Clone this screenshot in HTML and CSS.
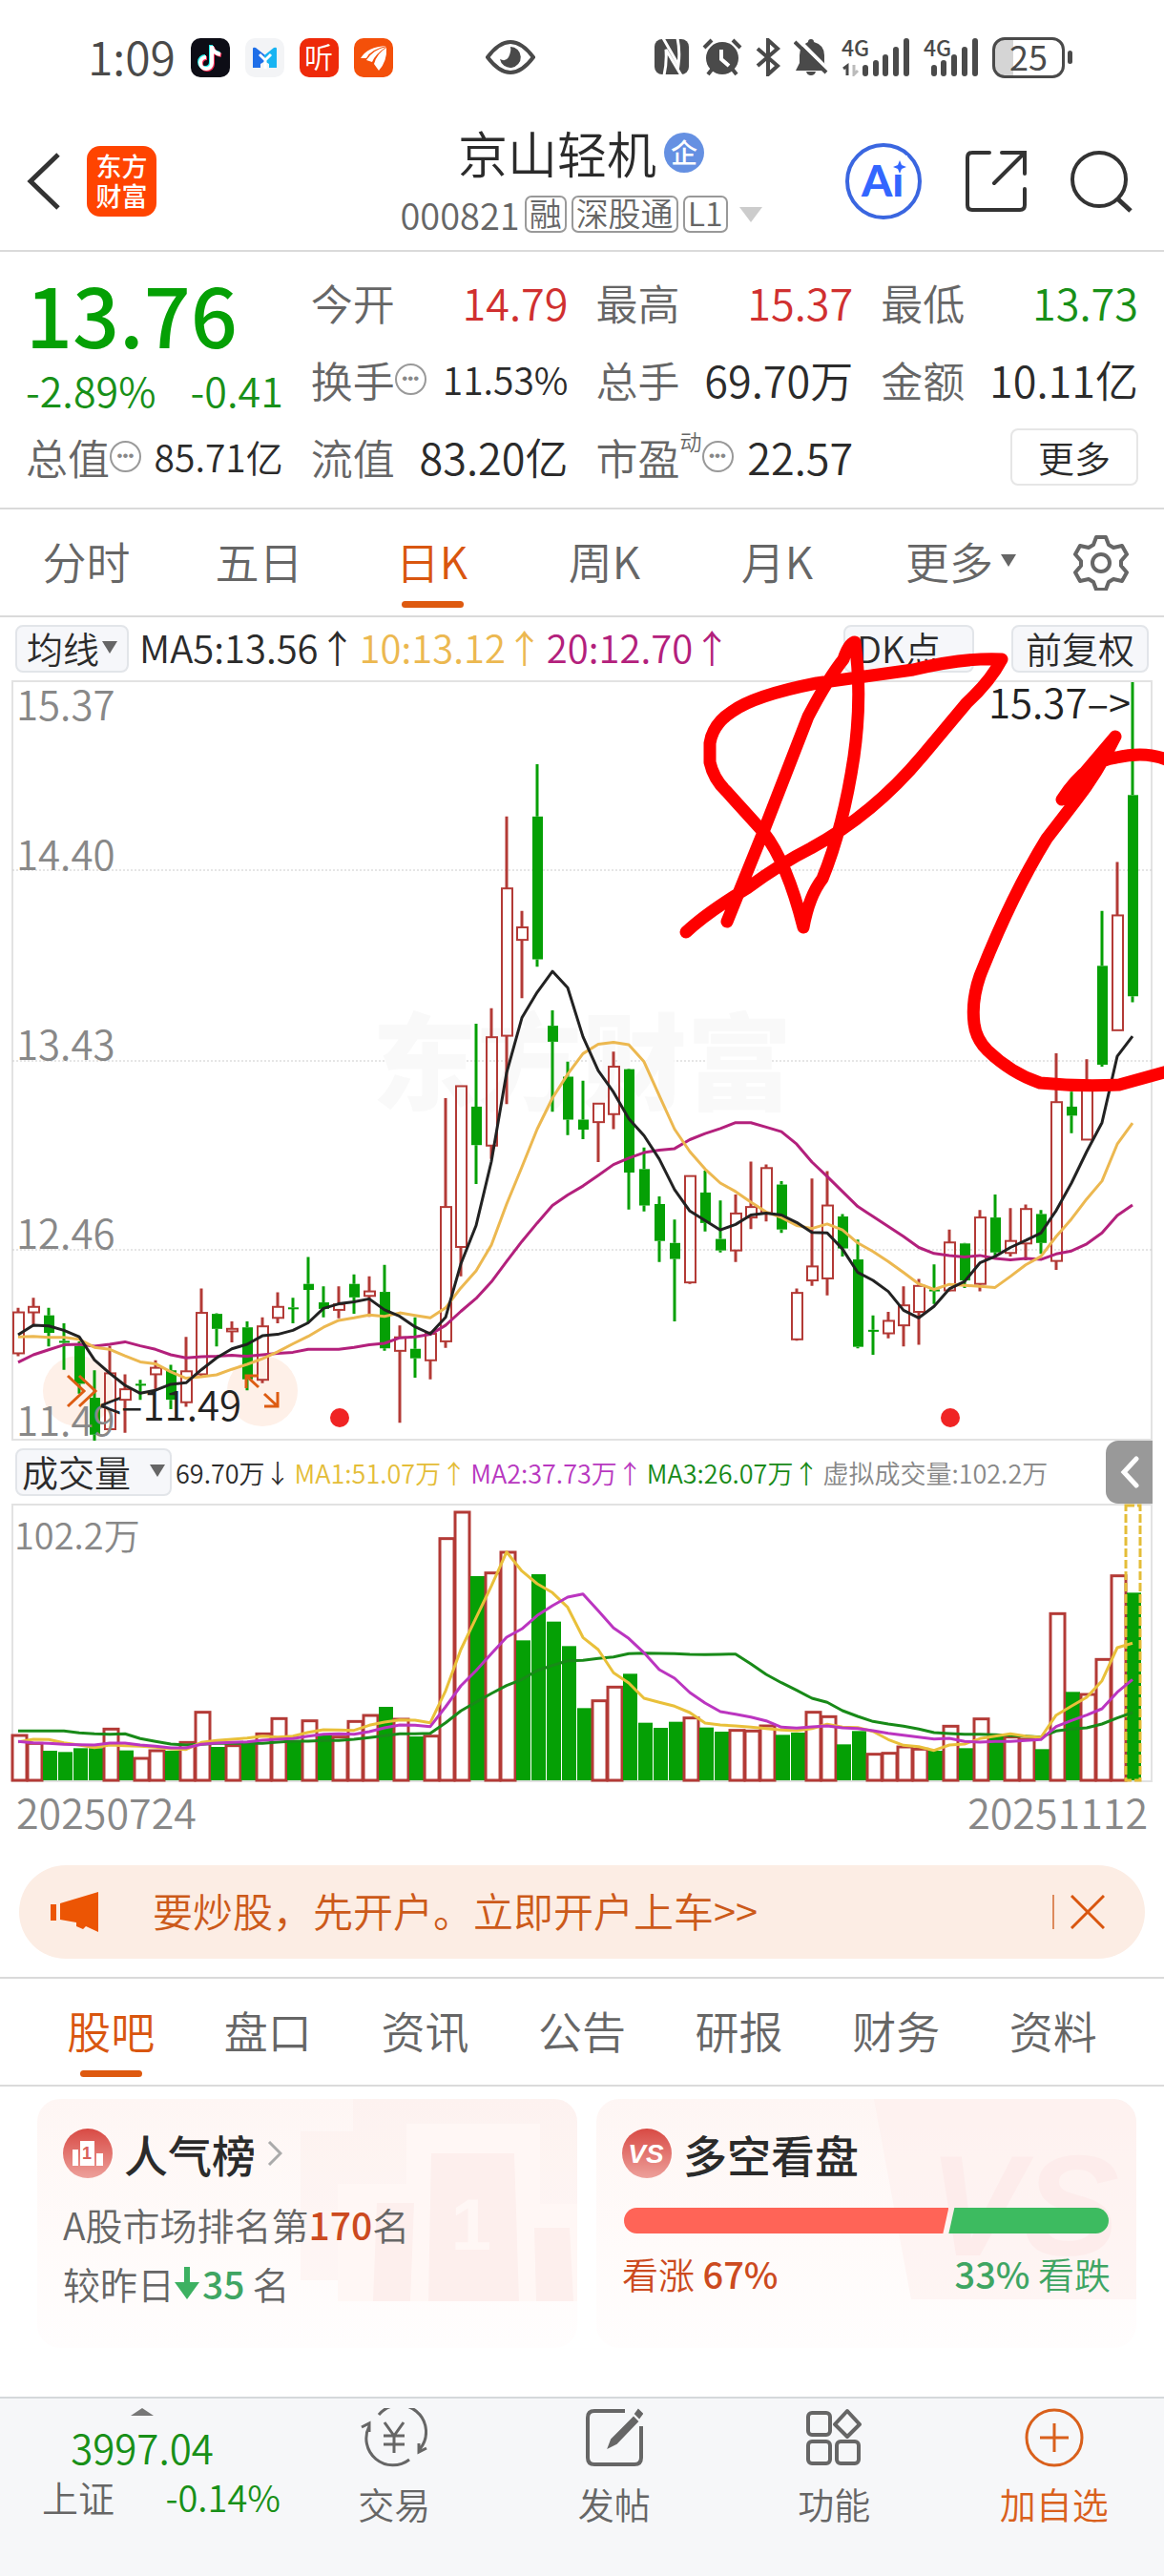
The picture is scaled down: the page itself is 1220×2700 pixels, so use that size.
FILE: index.html
```html
<!DOCTYPE html>
<html lang="zh-CN">
<head>
    <meta charset="UTF-8">
    <meta name="viewport" content="width=device-width, initial-scale=1.0">
    <title>京山轻机 000821</title>
    <link rel="stylesheet" href="styles.css">
</head>
<body>
    <div class="statusbar">
        <div class="status-left">
            <span class="clock">1:09</span>
            <svg class="app" viewBox="0 0 41 41"><rect width="41" height="41" rx="10" fill="#0d0d16"/><path d="M21 7v18a6 6 0 1 1-6-6M21 8c1 5 4 7 9 8" fill="none" stroke="#25f4ee" stroke-width="4"/><path d="M23 9v18a6 6 0 1 1-6-6M23 10c1 5 4 7 9 8" fill="none" stroke="#fe2c55" stroke-width="4"/><path d="M22 8v18a6 6 0 1 1-6-6M22 9c1 5 4 7 9 8" fill="none" stroke="#fff" stroke-width="4"/></svg>
            <svg class="app" viewBox="0 0 41 41"><rect width="41" height="41" rx="10" fill="#f3f4f6"/><path d="M8 11q0-2 3-1l10 8v6l-5 3v4H8z" fill="#1f6fe8"/><path d="M33 11q0-2-3-1l-10 8v6l5 3v4h8z" fill="#18b4f2"/><path d="M15 17l6 6 6-6M21 23v9" fill="none" stroke="#fff" stroke-width="3"/></svg>
            <svg class="app" viewBox="0 0 41 41"><rect width="41" height="41" rx="10" fill="#ee2a0a"/><text class="ting" x="20" y="31" text-anchor="middle">听</text></svg>
            <svg class="app" viewBox="0 0 41 41"><rect width="41" height="41" rx="10" fill="#f4500a"/><path d="M7 21Q14 9 34 8Q17 12 13 21zM13 23Q20 12 34 9Q22 17 19 25zM21 27Q24 16 34 10Q35 24 26 34z" fill="#fff"/></svg>
        </div>
        <svg class="eye" viewBox="0 0 52 38"><path d="M2 19Q14 3 26 3T50 19Q38 35 26 35T2 19z" fill="none" stroke="#4a4a4a" stroke-width="4"/><path d="M26 8a11 11 0 1 1-11 13q6 3 9-2 3-6 2-11z" fill="#4a4a4a"/></svg>
        <div class="status-right">
            <svg width="36" height="40" viewBox="0 0 36 40"><rect y="1" width="36" height="37" rx="8" fill="#4a4a4a"/><path d="M9 0l16 28q2-14-1-28M10 39q3-13 2-27l16 27" fill="none" stroke="#fff" stroke-width="3"/></svg>
            <svg width="42" height="40" viewBox="0 0 42 40"><circle cx="21" cy="21" r="17" fill="#4a4a4a"/><path d="M2 10l8-8M40 10l-8-8M10 33l-4 5M32 33l4 5" stroke="#4a4a4a" stroke-width="4"/><path d="M20 12v10l8 7" fill="none" stroke="#fff" stroke-width="4"/></svg>
            <svg width="26" height="40" viewBox="0 0 26 40"><path d="M2 11l21 18-10 9V2l10 9L2 29" fill="none" stroke="#4a4a4a" stroke-width="4"/></svg>
            <svg width="36" height="40" viewBox="0 0 36 40"><path d="M18 1q3 0 3 3 11 3 11 14v8l3 8H2l4-8v-8q0-10 9-14 0-3 3-3zM13 35h10q-1 4-5 4t-5-4z" fill="#4a4a4a"/><path d="M5 2l31 31" stroke="#fff" stroke-width="4"/><path d="M1 4l33 32" stroke="#4a4a4a" stroke-width="4"/></svg>
            <span class="signal"><b>4G</b><svg width="72" height="40" viewBox="0 0 72 40"><path d="M6 39V29l-4 3" fill="none" stroke="#4a4a4a" stroke-width="3"/><path d="M13 28v10l4-4" fill="none" stroke="#bbb" stroke-width="3"/><path d="M25 31v6M36 26v11M46 20v17M57 12v25M68 3v34" stroke="#4a4a4a" stroke-width="6" stroke-linecap="round"/></svg></span>
            <span class="signal"><b>4G</b><svg width="58" height="40" viewBox="0 0 58 40"><path d="M11 31v6M21 26v11M32 20v17M43 12v25M54 3v34" stroke="#4a4a4a" stroke-width="6" stroke-linecap="round"/></svg></span>
            <span class="battery">25</span>
        </div>
    </div>

    <header class="topbar">
        <button class="plain" aria-label="返回"><svg width="36" height="60" viewBox="0 0 36 60"><path d="M33 2L4 30l29 28" fill="none" stroke="#333" stroke-width="5"/></svg></button>
        <a class="logo" href="#">东方<br>财富</a>
        <div class="title">
            <h1>京山轻机<span class="corp">企</span></h1>
            <p class="code">000821<span class="mark">融</span><span class="mark">深股通</span><span class="mark">L1</span><i class="tri"></i></p>
        </div>
        <div class="tools">
            <button class="plain" aria-label="AI"><svg width="80" height="80" viewBox="0 0 80 80"><circle cx="40" cy="40" r="38" fill="none" stroke="#3a66e0" stroke-width="4"/><text class="ai" x="39" y="56" text-anchor="middle">Ai</text><path d="M49 13h16v20H49z" fill="#fff"/><path d="M57 18l2 5 5 2-5 2-2 5-2-5-5-2 5-2z" fill="#3366ff"/></svg></button>
            <button class="plain" aria-label="分享"><svg width="64" height="64" viewBox="0 0 64 64"><path d="M25 2H7Q2 2 2 7v50q0 5 5 5h50q5 0 5-5V40M38 2h24v22M61 3L30 34" fill="none" stroke="#333" stroke-width="4" stroke-linecap="round"/></svg></button>
            <button class="plain" aria-label="搜索"><svg width="66" height="66" viewBox="0 0 66 66"><circle cx="30" cy="31" r="28" fill="none" stroke="#333" stroke-width="4"/><path d="M49 51l14 13" stroke="#333" stroke-width="5"/></svg></button>
        </div>
    </header>

    <section class="quote">
        <div class="price">
            <strong>13.76</strong>
            <span class="chg"><span>-2.89%</span><span>-0.41</span></span>
        </div>
        <div class="cell"><span>今开</span><b class="up">14.79</b></div>
        <div class="cell"><span>最高</span><b class="up">15.37</b></div>
        <div class="cell"><span>最低</span><b class="down">13.73</b></div>
        <div class="cell"><span>换手<i class="info">•••</i></span><b class="small">11.53%</b></div>
        <div class="cell"><span>总手</span><b>69.70万</b></div>
        <div class="cell"><span>金额</span><b>10.11亿</b></div>
        <div class="cell"><span>总值<i class="info">•••</i></span><b class="small">85.71亿</b></div>
        <div class="cell"><span>流值</span><b>83.20亿</b></div>
        <div class="cell"><span>市盈<sup>动</sup><i class="info">•••</i></span><b>22.57</b></div>
        <div class="cell cell-more"><button class="more">更多</button></div>
    </section>

    <nav class="periods">
        <button>分时</button>
        <button>五日</button>
        <button class="active">日K</button>
        <button>周K</button>
        <button>月K</button>
        <button class="drop">更多<i class="caret"></i></button>
        <button class="gear" aria-label="设置"><svg width="58" height="58" viewBox="0 0 58 58"><path d="M24 2h10l3 8 5 3 9-2 5 9-6 7v5l6 7-5 9-9-2-5 3-3 8H24l-3-8-5-3-9 2-5-9 6-7v-5l-6-7 5-9 9 2 5-3z" fill="none" stroke="#666" stroke-width="4" stroke-linejoin="round"/><circle cx="29" cy="29" r="9" fill="none" stroke="#666" stroke-width="4"/></svg></button>
    </nav>

    <div class="mabar">
        <button class="chip">均线<i class="caret"></i></button>
        <span class="ma5">MA5:13.56↑</span>
        <span class="ma10">10:13.12↑</span>
        <span class="ma20">20:12.70↑</span>
        <button class="chip dk">DK点</button>
        <button class="chip">前复权</button>
    </div>

    <div class="kline">
        <svg class="chart" id="kline" viewBox="0 0 1220 797">
            <g class="grid">
                <path class="frame" d="M12 1H1208M12 796H1208M13 1V796M1207 1V796"/>
                <path class="dots" d="M13 199H1207M13 399H1207M13 597H1207"/>
            </g>
            <text class="watermark" x="390" y="442">东方财富</text>
            <circle class="round" cx="82" cy="745" r="37"/>
            <circle class="round" cx="275" cy="745" r="37"/>
            <g id="candles"></g>
            <g id="lines"></g>
            <g class="axis">
                <text x="17" y="42">15.37</text>
                <text x="17" y="199">14.40</text>
                <text x="17" y="398">13.43</text>
                <text x="17" y="596">12.46</text>
                <text x="17" y="792">11.49</text>
            </g>
            <path class="orange" d="M71 729l17 16-17 16M83 729l17 16-17 16M258 742v-13h13M258 729l13 12M277 761h14v-15M291 761l-14-13"/>
            <text class="note" x="104" y="776">&lt;–11.49</text>
            <text class="note" x="1185" y="40" text-anchor="end">15.37–&gt;</text>
            <circle cx="356" cy="773" r="10" fill="#f02424"/>
            <circle cx="996" cy="773" r="10" fill="#f02424"/>
        </svg>
        <svg class="scribble" viewBox="0 654 1220 500">
            <path d="M719 978Q740 958 783 932Q820 905 850 890Q915 855 967 793L1013 738Q1038 715 1050 692Q1010 690 957 703L856 717Q790 730 767 747Q747 760 744 780V800Q748 818 762 831L800 873Q825 905 842 973Q848 940 862 922Q884 868 895 794Q904 730 896 674Q890 674 884 692Q868 712 847 752L800 873L762 967"/>
            <path d="M1169 773L1113 839Q1140 798 1170 795Q1200 788 1222 797M1169 773Q1150 812 1127 841L1097 880Q1060 940 1027 1024Q1018 1050 1021 1074Q1023 1090 1035 1102Q1060 1126 1090 1136Q1130 1140 1173 1138L1224 1124M1160 787L1122 832"/>
        </svg>
    </div>

    <div class="volbar">
        <button class="chip">成交量<i class="caret"></i></button>
        <span>69.70万↓</span>
        <span class="v1">MA1:51.07万↑</span>
        <span class="v2">MA2:37.73万↑</span>
        <span class="v3">MA3:26.07万↑</span>
        <span class="v4">虚拟成交量:102.2万</span>
        <button class="fold" aria-label="收起"><svg width="20" height="34" viewBox="0 0 20 34"><path d="M17 3L4 17l13 14" fill="none" stroke="#fff" stroke-width="5" stroke-linecap="round"/></svg></button>
    </div>

    <svg class="chart" id="volume" viewBox="0 0 1220 292">
        <path class="frame" d="M12 1H1208M12 291H1208M13 1V291M1207 1V291"/>
        <g id="bars"></g>
        <g id="vlines"></g>
        <text class="vmax" x="15" y="48">102.2万</text>
    </svg>
    <div class="dates"><span>20250724</span><span>20251112</span></div>

    <div class="banner">
        <svg width="50" height="42" viewBox="0 0 50 42"><path d="M0 13h6v17H0zM10 12L50 0v42l-13-6-3 3-7-3v-4l-17-3z" fill="#ec5504"/></svg>
        <a href="#">要炒股，先开户。立即开户上车&gt;&gt;</a>
        <button class="plain" aria-label="关闭"><svg width="36" height="36" viewBox="0 0 36 36"><path d="M1 1l34 34M35 1L1 35" stroke="#d9560f" stroke-width="3"/></svg></button>
    </div>

    <nav class="sections">
        <button class="active">股吧</button>
        <button>盘口</button>
        <button>资讯</button>
        <button>公告</button>
        <button>研报</button>
        <button>财务</button>
        <button>资料</button>
    </nav>

    <main class="cards">
        <article class="card">
            <svg class="deco" viewBox="0 0 566 261">
                <path d="M331 0H566V190H276V34h55z" fill="#fdeeec" opacity=".4"/>
                <path d="M315 212V89h72V26h140v84h39v102z" fill="#fff7f5"/>
                <path d="M356 109h39l-4 103h-39zM413 57h87l5 155H410zM521 135h37l4 77h-39z" fill="#fdefed"/>
                <text class="one" x="455" y="158" text-anchor="middle">1</text>
            </svg>
            <h2><svg width="52" height="52" viewBox="0 0 52 52"><defs><linearGradient id="g" x2="0" y2="1"><stop stop-color="#d84a44"/><stop offset="1" stop-color="#eda09b"/></linearGradient></defs><circle cx="26" cy="26" r="26" fill="url(#g)"/><path d="M10 22h6v17h-6zM18 13h15v26H18zM35 26h7v13h-7z" fill="#fff"/><text class="first" x="25" y="32" text-anchor="middle">1</text></svg>人气榜<svg class="go" width="16" height="26" viewBox="0 0 16 26"><path d="M2 1l12 12L2 25" fill="none" stroke="#aaa" stroke-width="3"/></svg></h2>
            <p>A股市场排名第<b>170</b>名</p>
            <p>较昨日<svg width="26" height="34" viewBox="0 0 26 34"><path d="M10 0h6v16h10L13 34 0 16h10z" fill="#3db161"/></svg><b class="fall">35</b>名</p>
        </article>
        <article class="card">
            <svg class="deco" viewBox="0 0 566 261">
                <path d="M291 0H566V210H330Z" fill="#fdeeec" opacity=".5"/>
                <text x="348" y="164" class="vs">VS</text>
            </svg>
            <h2><svg width="52" height="52" viewBox="0 0 52 52"><circle cx="26" cy="26" r="26" fill="url(#g)"/><text x="25" y="36" text-anchor="middle" class="vsicon">VS</text></svg>多空看盘</h2>
            <div class="ratio"><span class="bull"></span><span class="bear"></span></div>
            <div class="ratio-text"><span class="rise">看涨 <b>67%</b></span><span class="fall"><b>33%</b> 看跌</span></div>
        </article>
    </main>

    <footer class="bottombar">
        <a class="index" href="#">
            <i></i>
            <span class="val">3997.04</span>
            <span class="row"><span>上证</span><em>-0.14%</em></span>
        </a>
        <a href="#"><svg width="70" height="62" viewBox="0 0 70 62" fill="none" stroke="#666" stroke-width="3"><path d="M19 7a28 28 0 0 1 43 36M51 54A28 28 0 0 1 9 19M1 20l8-4v9M69 42l-8 4v-9M25 15l10 14 10-14M35 29v18M24 29h22M24 38h22"/></svg>交易</a>
        <a href="#"><svg width="60" height="62" viewBox="0 0 60 62"><path d="M41 3H9Q2 3 2 10v42q0 7 7 7h42q7 0 7-7V19" fill="none" stroke="#666" stroke-width="4"/><path d="M50 10L27 33l-3 8 8-4 22-23zM52 6l3-4 4 4-3 4z" fill="#666" stroke="#666" stroke-width="2"/></svg>发帖</a>
        <a href="#"><svg width="58" height="62" viewBox="0 0 58 62" fill="none" stroke="#666" stroke-width="4"><rect x="2" y="5" width="23" height="23" rx="4"/><rect x="2" y="35" width="23" height="23" rx="4"/><rect x="32" y="35" width="23" height="23" rx="4"/><path d="M43 3l13 14-13 13-13-13z" stroke-linejoin="round"/></svg>功能</a>
        <a class="add" href="#"><svg width="62" height="62" viewBox="0 0 62 62" fill="none" stroke="#d9601c" stroke-width="3"><circle cx="31" cy="31" r="29"/><path d="M31 16v30M16 31h30"/></svg>加自选</a>
    </footer>
    <script src="chart.js"></script>
</body>
</html>
```

FILE: styles.css
```css
* {
    box-sizing: border-box;
}
body {
    margin: 0;
    background: #fff;
    color: #2b2b2b;
    font-family: "Noto Sans CJK SC", "Noto Sans", sans-serif;
    font-weight: 350;
    font-size: 38px;
    line-height: 1;
    min-height: 100vh;
    display: flex;
    flex-direction: column;
}
button {
    font: inherit;
    color: inherit;
    padding: 0;
    border: none;
    background: none;
    cursor: pointer;
}
a {
    color: inherit;
    text-decoration: none;
}
i, em {
    font-style: normal;
}
svg {
    display: block;
    flex: none;
}
.plain {
    display: block;
}

/* status bar */
.statusbar {
    height: 120px;
    padding: 0 104px 0 92px;
    display: flex;
    align-items: center;
    justify-content: space-between;
    color: #4a4a4a;
}
.status-left, .status-right {
    display: flex;
    align-items: center;
}
.status-left {
    gap: 16px;
}
.clock {
    padding-bottom: 4px;
    font-size: 48px;
}
.app {
    width: 41px;
    height: 41px;
}
.ting {
    font-size: 30px;
    fill: #fff;
}
.eye {
    width: 52px;
    height: 38px;
    margin-right: 28px;
}
.status-right {
    gap: 14px;
}
.signal {
    position: relative;
}
.signal b {
    position: absolute;
    left: 0;
    top: -2px;
    font-size: 23px;
    font-weight: 500;
}
.battery {
    width: 76px;
    height: 43px;
    border: 3px solid #4a4a4a;
    border-radius: 13px;
    background: linear-gradient(90deg, #d5d5d5 27%, #fff 27%);
    font-size: 36px;
    font-weight: 400;
    line-height: 33px;
    text-align: center;
    position: relative;
}
.battery::after {
    content: "";
    position: absolute;
    right: -11px;
    top: 11px;
    width: 5px;
    height: 14px;
    border-radius: 3px;
    background: #4a4a4a;
}

/* header */
.topbar {
    height: 144px;
    padding: 0 32px 2px 28px;
    border-bottom: 2px solid #dadada;
    display: flex;
    align-items: center;
}
.logo {
    width: 73px;
    height: 74px;
    margin-left: 27px;
    padding-top: 5px;
    border-radius: 14px;
    background: #ff4400;
    color: #fff;
    font-size: 27px;
    font-weight: 500;
    line-height: 31px;
    text-align: center;
}
.title {
    flex: 1;
    padding-left: 168px;
    display: flex;
    flex-direction: column;
    align-items: center;
    white-space: nowrap;
}
.title h1 {
    margin: 5px 0 0;
    font-size: 52px;
    font-weight: 350;
    line-height: 64px;
    display: flex;
    align-items: center;
}
.corp {
    width: 42px;
    height: 42px;
    margin-left: 8px;
    border-radius: 50%;
    background: #6590e2;
    color: #fff;
    font-size: 28px;
    font-weight: 500;
    line-height: 40px;
    text-align: center;
}
.code {
    margin: 0;
    height: 66px;
    display: flex;
    align-items: center;
    gap: 5px;
    color: #666;
}
.mark {
    height: 39px;
    padding: 0 3px;
    border: 2px solid #999;
    border-radius: 7px;
    font-size: 34px;
    line-height: 31px;
}
.tri {
    margin-left: 7px;
    border: 12px solid transparent;
    border-top: 16px solid #ccc;
    border-bottom: none;
}
.tools {
    display: flex;
    align-items: center;
    gap: 46px;
}
.ai {
    font: 900 46px Lato, sans-serif;
    fill: #3366ff;
}

/* quote */
.quote {
    height: 270px;
    padding: 12px 27px 10px;
    border-bottom: 2px solid #dadada;
    display: grid;
    grid-template-columns: repeat(4, 1fr);
    grid-template-rows: repeat(3, 81px);
    column-gap: 29px;
}
.price {
    grid-row: span 2;
    color: #05a005;
}
.price strong {
    display: block;
    padding-top: 4px;
    font-size: 86px;
    font-weight: 500;
    line-height: 96px;
}
.chg {
    display: flex;
    justify-content: space-between;
    font-size: 43px;
    line-height: 64px;
    color: #189018;
}
.cell {
    display: flex;
    align-items: center;
    justify-content: space-between;
    font-size: 44px;
    white-space: nowrap;
}
.cell > span {
    display: flex;
    align-items: center;
    color: #666;
}
.cell b {
    font-size: 45px;
    font-weight: 350;
}
.cell .up {
    color: #d03030;
}
.cell .down {
    color: #189018;
}
.cell .small {
    font-size: 39px;
}
.cell sup {
    align-self: flex-start;
    font-size: 23px;
    line-height: 10px;
}
.info {
    width: 33px;
    height: 33px;
    border: 2px solid #999;
    border-radius: 50%;
    color: #888;
    font-family: "Liberation Sans", sans-serif;
    font-size: 17px;
    line-height: 28px;
    text-align: center;
}
.cell-more {
    justify-content: flex-end;
}
.more {
    width: 134px;
    height: 60px;
    border: 2px solid #e6e6e6;
    border-radius: 8px;
    font-size: 38px;
    line-height: 50px;
}

/* tabs */
.periods, .sections {
    display: flex;
    color: #666;
    font-size: 46px;
    border-bottom: 2px solid #dadada;
}
.periods {
    height: 113px;
    padding-right: 37px;
}
.periods button {
    flex: 1;
    padding-bottom: 5px;
}
.periods .drop {
    flex: none;
    width: 220px;
    padding-right: 16px;
    display: flex;
    align-items: center;
    justify-content: center;
}
.periods .gear {
    flex: none;
    padding-bottom: 0;
    display: flex;
    align-items: center;
}
.active {
    color: #d9560f;
    position: relative;
}
.active::after {
    content: "";
    position: absolute;
    left: 50%;
    bottom: 8px;
    width: 65px;
    height: 7px;
    margin-left: -32px;
    border-radius: 4px;
    background: #de5a10;
}
.caret {
    display: inline-block;
    margin-left: 8px;
    border: 8px solid transparent;
    border-top: 13px solid #666;
    border-bottom: none;
}

/* moving averages */
.mabar, .volbar {
    display: flex;
    align-items: center;
    padding: 0 16px;
    white-space: nowrap;
}
.mabar {
    height: 66px;
}
.mabar > span {
    margin-right: 3px;
    padding-bottom: 4px;
    font-size: 40px;
}
.mabar .ma5 {
    margin-left: 11px;
}
.chip {
    height: 50px;
    padding: 0 10px 3px;
    border: 2px solid #e2e5e9;
    border-radius: 8px;
    background: #f6f7fa;
    display: flex;
    align-items: center;
}
.chip .caret {
    margin-left: 3px;
}
.ma10 {
    color: #ecb850;
}
.ma20 {
    color: #b3207c;
}
.dk {
    width: 137px;
    margin-left: auto;
    margin-right: 39px;
    padding-left: 12px;
}
.mabar .chip:last-child {
    padding: 0 13px 3px;
}

/* charts */
.kline {
    position: relative;
}
.chart {
    width: 100%;
    height: auto;
}
.scribble {
    position: absolute;
    left: 0;
    top: -60px;
    width: 100%;
    pointer-events: none;
    fill: none;
    stroke: #fe0000;
    stroke-width: 13;
    stroke-linecap: round;
    stroke-linejoin: round;
}
.frame {
    fill: none;
    stroke: #e2e2e2;
    stroke-width: 2;
}
.dots {
    stroke: #ccc;
    stroke-dasharray: 2 2;
}
.watermark {
    font-size: 110px;
    font-weight: 900;
    fill: #f9f9f9;
}
.round {
    fill: #fef0e8;
}
.axis {
    font-size: 42px;
    fill: #888;
}
.vmax {
    font-size: 38px;
    fill: #888;
}
.note {
    font-size: 42px;
    fill: #222;
}
.orange {
    fill: none;
    stroke: #dd5c12;
    stroke-width: 3;
}
.line {
    fill: none;
    stroke-width: 3;
    stroke-linejoin: round;
}
.volbar {
    height: 66px;
    padding-right: 12px;
    font-size: 27px;
    gap: 4px;
}
.volbar .chip {
    width: 164px;
    padding: 0 5px 3px;
    font-size: 38px;
    justify-content: space-between;
}
.v1 {
    color: #e4bd38;
}
.v2 {
    color: #b838c0;
}
.v3 {
    color: #188a18;
}
.v4 {
    color: #888;
}
.fold {
    width: 49px;
    height: 66px;
    margin-left: auto;
    border-radius: 13px 0 0 13px;
    background: #999;
    display: flex;
    align-items: center;
    justify-content: center;
}
.dates {
    height: 65px;
    padding: 0 17px 4px;
    display: flex;
    align-items: center;
    justify-content: space-between;
    font-size: 43px;
    color: #888;
}

/* ad banner */
.banner {
    height: 98px;
    margin: 22px 20px 19px;
    padding: 0 42px 0 33px;
    border-radius: 49px;
    background: #fcede4;
    color: #cc5a1a;
    font-size: 42px;
    display: flex;
    align-items: center;
}
.banner a {
    margin-left: 57px;
    padding-bottom: 4px;
}
.banner .plain {
    margin-left: auto;
    padding-left: 17px;
    border-left: 2px solid #dd8a5c;
}

.sections {
    height: 115px;
    padding: 0 34px;
    border-top: 2px solid #dadada;
}
.sections button {
    flex: 1;
    padding-bottom: 5px;
}

/* cards */
.cards {
    padding: 13px 29px 0 39px;
    display: grid;
    grid-template-columns: 1fr 1fr;
    gap: 20px;
}
.card {
    height: 261px;
    padding: 0 27px;
    border-radius: 24px;
    background: linear-gradient(#fef6f4, #fffbfa 60%, #fffdfd);
    position: relative;
    overflow: hidden;
    color: #666;
}
.deco {
    position: absolute;
    left: 0;
    top: 0;
    width: 100%;
}
.card > :not(.deco) {
    position: relative;
}
.card h2 {
    margin: 0;
    height: 114px;
    display: flex;
    align-items: center;
    gap: 12px;
    color: #2b2b2b;
    font-size: 46px;
    font-weight: 500;
}
.card p {
    margin: 0;
    height: 62px;
    display: flex;
    align-items: center;
    font-size: 39px;
}
.card p:first-of-type {
    margin-top: -14px;
}
.card p b {
    color: #cc4a20;
    font-weight: 500;
}
.card .fall, .card p .fall {
    color: #3fa563;
}
.card p .fall {
    margin: 0 8px 0 3px;
}
.rise {
    color: #cc4a20;
}
.one {
    font: bold 76px "Liberation Sans", sans-serif;
    fill: #fff7f5;
}
.first {
    font: bold 18px "Liberation Sans", sans-serif;
    fill: #d9605a;
}
.vs {
    font: italic bold 150px "Liberation Sans", sans-serif;
    fill: #fdeceb;
}
.vsicon {
    font: italic bold 28px "Liberation Sans", sans-serif;
    fill: #fff;
}
.ratio {
    display: flex;
    height: 27px;
    margin: 0 2px;
}
.ratio span {
    height: 100%;
}
.bull {
    flex: 67;
    border-radius: 14px 0 0 14px;
    background: #ff6457;
    clip-path: polygon(0 0, 100% 0, calc(100% - 6px) 100%, 0 100%);
}
.bear {
    flex: 33;
    border-radius: 0 14px 14px 0;
    background: #3dbb60;
    clip-path: polygon(6px 0, 100% 0, 100% 100%, 0 100%);
}
.ratio-text {
    display: flex;
    justify-content: space-between;
    line-height: 84px;
}
.ratio-text b {
    font-weight: 500;
}

/* bottom bar */
.bottombar {
    flex: 1;
    margin-top: 51px;
    min-height: 187px;
    padding-top: 10px;
    border-top: 2px solid #d5d8db;
    background: #f6f7f9;
    color: #666;
    display: grid;
    grid-template-columns: 298px repeat(4, 1fr);
}
.bottombar a {
    display: flex;
    flex-direction: column;
    align-items: center;
    gap: 19px;
}
.bottombar .add {
    color: #d9601c;
}
.bottombar .index {
    gap: 12px;
    color: #189018;
}
.index i {
    border: 12px solid transparent;
    border-bottom: 8px solid #777;
    border-top: none;
}
.index .val {
    font-size: 42px;
}
.index .row {
    width: 290px;
    padding-left: 40px;
    display: flex;
    justify-content: space-between;
    color: #666;
}
.index em {
    color: #189018;
}
```

FILE: chart.js
```js
const UP = '#b33a36', DOWN = '#05a005';
const x = i => 19 + i * 16;

// each candle: colour, high, body top, body bottom, low (28 = 15.37, 1547 = 11.49)
const candles = `r 1283 1292 1374 1380,r 1263 1281 1292 1320,g 1283 1298 1333 1360,g 1314 1349 1353 1407,
g 1350 1359 1435 1455,g 1408 1463 1537 1549,r 1359 1414 1526 1526,r 1416 1446 1467 1533,g 1427 1435 1438 1467,
r 1388 1403 1416 1449,g 1397 1408 1467 1486,r 1341 1410 1472 1481,r 1244 1293 1416 1422,g 1294 1295 1325 1360,
r 1310 1325 1330 1352,g 1310 1322 1426 1448,r 1302 1320 1427 1434,r 1252 1281 1303 1314,g 1263 1282 1285 1314,
g 1181 1235 1247 1312,g 1240 1272 1285 1302,r 1240 1276 1287 1304,g 1216 1235 1262 1295,r 1220 1250 1259 1301,
g 1197 1251 1364 1369,r 1318 1342 1369 1513,g 1302 1365 1384 1423,r 1330 1335 1388 1426,r 863 1081 1350 1363,
r 838 839 1161 1220,g 714 880 957 1035,r 683 741 958 985,r 299 443 738 875,r 488 521 546 663,g 194 299 585 600,
g 687 718 750 890,g 790 820 906 937,g 828 906 926 945,r 873 874 911 991,r 770 800 895 925,g 804 805 1012 1086,
g 962 1005 1078 1090,g 1060 1075 1149 1191,g 1106 1153 1185 1310,r 1018 1019 1232 1235,g 1008 1052 1113 1130,
g 1068 1145 1168 1172,r 1056 1094 1168 1191,r 990 1081 1102 1125,r 996 1003 1093 1110,g 1029 1036 1126 1133,
r 1244 1253 1346 1349,r 1024 1200 1228 1239,r 1009 1078 1224 1258,g 1095 1100 1164 1180,g 1146 1186 1361 1364,
g 1298 1327 1329 1377,r 1291 1309 1334 1344,r 1240 1278 1318 1360,r 1225 1239 1291 1357,g 1196 1246 1250 1275,
r 1126 1152 1248 1250,g 1153 1154 1228 1243,r 1087 1102 1235 1250,g 1056 1102 1172 1185,r 1083 1149 1173 1180,
r 1076 1085 1154 1188,g 1087 1095 1153 1175,r 773 871 1189 1207,g 850 880 898 933,r 785 830 946 946,
g 488 598 796 800,r 390 497 727 727,g 30 256 659 671`.split(',').map(s => s.trim().split(' '));

const ma = {
    '#b3207c': [1392,1377,1367,1357,1356,1360,1356,1351,1359,1366,1377,1383,1381,1380,1378,1380,1377,1374,1372,1366,1366,1366,1362,1357,1354,1343,1341,1336,1318,1290,1264,1231,1190,1150,1113,1078,1057,1039,1018,996,983,972,967,964,946,934,924,912,912,921,930,955,991,1020,1050,1080,1100,1120,1140,1162,1174,1178,1181,1178,1184,1187,1184,1186,1175,1169,1155,1133,1098,1077],
    '#ecb850': [1341,1340,1342,1342,1346,1362,1366,1379,1391,1395,1411,1424,1421,1417,1406,1396,1385,1371,1355,1340,1322,1308,1303,1297,1300,1293,1298,1303,1283,1243,1209,1157,1075,1001,925,863,815,774,755,751,756,790,858,925,970,1005,1033,1050,1071,1091,1102,1118,1124,1115,1127,1153,1170,1190,1212,1235,1246,1236,1238,1240,1242,1220,1197,1180,1140,1105,1065,1029,955,913],
    '#222': [1337,1318,1319,1328,1341,1387,1414,1438,1454,1448,1436,1433,1407,1383,1365,1356,1339,1336,1328,1313,1284,1275,1271,1265,1287,1300,1321,1335,1302,1195,1118,990,812,702,651,609,642,740,808,851,904,938,985,1046,1089,1108,1127,1116,1097,1093,1097,1112,1132,1133,1165,1212,1228,1250,1288,1303,1280,1245,1230,1193,1180,1162,1148,1133,1088,1033,970,912,779,739]
};

// volume bar tops (234 = 102.2万, 1102 = 0)
const volume = `r960 r985 g1008 g1012 g1000 g1000 r940 g1007 r1032 r1008 g1008 r982 r887 g996 r992 g985 r955 r907 g978 r914
g960 r965 r916 r897 g870 r909 g963 r962 r341 r258 g459 r449 r384 g661 g453 g602 g679 g874 r851 r808 g766 g920 g936 g917
r905 g935 g948 r944 r946 r930 g958 g951 r887 r901 g988 g946 r1019 r1016 r996 r1003 g1008 r931 g1000 r908 g960 r965 r972
g1003 r577 g823 r831 r721 r458 g511`.split(/\s+/);

const vma = {
    '#188a18': [946,946,946,946,952,955,956,955,970,979,987,990,988,985,985,985,985,981,978,978,976,976,972,967,961,955,955,953,920,883,855,828,803,784,756,740,725,724,718,713,703,701,702,703,705,706,705,704,735,768,794,818,843,856,882,900,916,924,931,940,951,954,956,956,958,960,962,965,946,940,936,924,905,888],
    '#e9c03a': [980,972,973,983,990,998,990,992,994,997,1002,1004,982,976,972,968,962,965,962,950,942,943,944,928,918,911,912,920,820,690,590,490,383,443,483,511,557,652,690,763,795,843,856,868,888,921,927,930,934,938,943,945,938,925,934,935,947,973,991,995,1007,990,987,970,962,955,962,966,896,868,840,788,684,670],
    '#bb35c0': [979,983,985,988,989,990,984,984,990,994,999,999,988,984,982,980,975,972,970,962,956,955,956,948,936,927,928,932,870,804,756,703,651,625,583,552,525,515,568,622,655,700,753,780,825,858,885,893,902,914,934,937,933,930,936,938,945,953,959,965,971,969,979,981,979,979,976,973,932,913,896,876,824,784]
};

const ky = v => 1 + (v - 28) * 795 / 1519;
const vy = v => 1 + (v - 234) / 3;

function polyline(values, y, color) {
    return `<polyline class="line" stroke="${color}" points="${values.map((v, i) => x(i) + ',' + y(v).toFixed(1)).join(' ')}"/>`;
}

document.getElementById('candles').innerHTML = candles.map(([c, h, t, b, l], i) => {
    const color = c === 'r' ? UP : DOWN;
    const top = ky(+t), bottom = ky(+b);
    const wick = `<path d="M${x(i)} ${ky(+h)}V${top}M${x(i)} ${bottom}V${ky(+l)}" stroke="${color}" stroke-width="3"/>`;
    if (c === 'r') {
        return wick + `<rect x="${x(i) - 5}" y="${top}" width="11" height="${Math.max(bottom - top, 1)}" fill="none" stroke="${color}" stroke-width="2"/>`;
    }
    return wick + `<rect x="${x(i) - 5}" y="${top}" width="11" height="${Math.max(bottom - top, 2)}" fill="${color}"/>`;
}).join('');

document.getElementById('lines').innerHTML = Object.keys(ma).map(c => polyline(ma[c], ky, c)).join('');

document.getElementById('bars').innerHTML = volume.map((s, i) => {
    const top = vy(+s.slice(1));
    if (s[0] === 'r') {
        return `<rect x="${x(i) - 6}" y="${top}" width="15" height="${290 - top}" fill="none" stroke="${UP}" stroke-width="3"/>`;
    }
    return `<rect x="${x(i) - 6}" y="${top}" width="15" height="${290 - top}" fill="${DOWN}"/>`;
}).join('') + '<rect x="1180" y="2" width="15" height="288" fill="none" stroke="#e4bd38" stroke-width="3" stroke-dasharray="9 3"/>';

document.getElementById('vlines').innerHTML = Object.keys(vma).map(c => polyline(vma[c], vy, c)).join('');
```
